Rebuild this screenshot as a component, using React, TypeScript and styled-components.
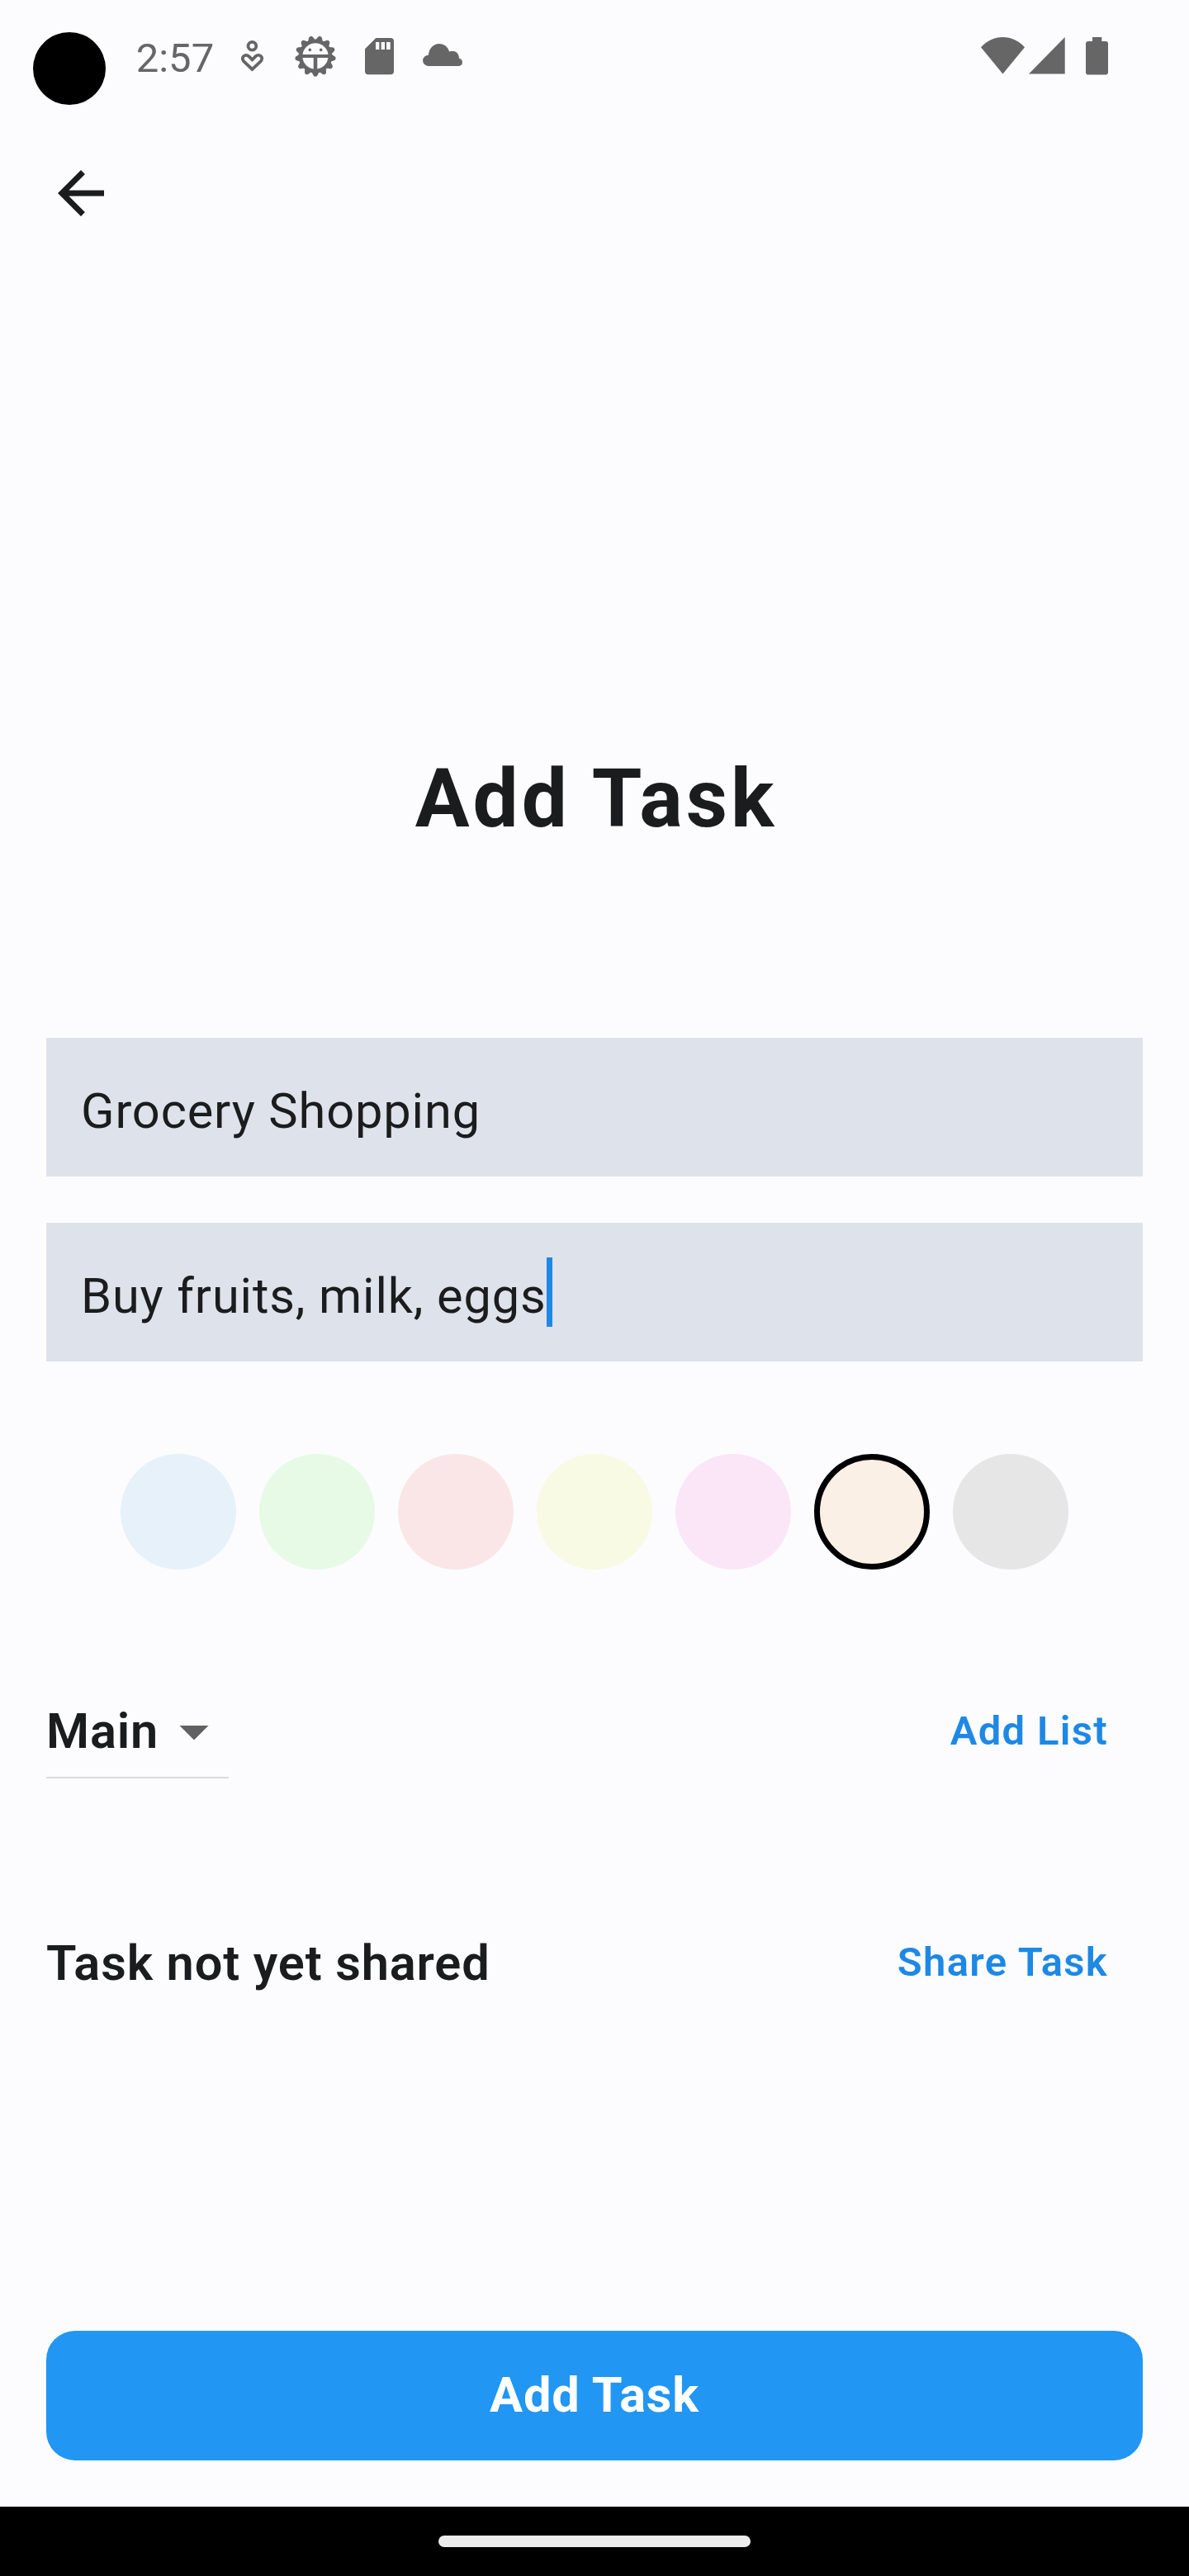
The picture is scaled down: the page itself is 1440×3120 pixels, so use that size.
import React, { useState } from "react";
import styled, { createGlobalStyle } from "styled-components";

const GlobalStyle = createGlobalStyle`
  * { box-sizing: border-box; }
  body { margin: 0; background: #fcfcff; }
`;

const Screen = styled.div`
  width: 1440px;
  height: 3120px;
  display: flex;
  flex-direction: column;
  background: #fcfcff;
  color: #1a1c1e;
  font-family: Roboto, "Noto Sans", sans-serif;
  overflow: hidden;
`;

const StatusBar = styled.header`
  display: flex;
  align-items: flex-start;
  height: 164px;
  padding: 39px 98px 0 40px;
  color: #666;
`;

const Camera = styled.div`
  width: 88px;
  height: 88px;
  border-radius: 50%;
  background: #000;
`;

const Clock = styled.time`
  margin: 2.5px 0 0 36.7px;
  width: 99.3px;
  font-size: 49px;
  line-height: 58px;
  white-space: nowrap;
`;

const StatusIcon = styled.svg<{ $left?: number; $top: number }>`
  display: block;
  flex: none;
  margin-left: ${(p) => p.$left ?? 0}px;
  margin-top: ${(p) => p.$top}px;
  fill: currentColor;
`;

const Spacer = styled.div`
  flex: 1;
`;

const AppBar = styled.nav`
  height: 140px;
  padding: 28px 56px;
`;

const BackButton = styled.button`
  display: block;
  width: 84px;
  height: 84px;
  padding: 0;
  border: 0;
  background: none;
  color: #1a1c1e;
`;

const Form = styled.main`
  flex: 1;
  display: flex;
  flex-direction: column;
  padding: 0 56px 56px;
`;

const Title = styled.h1`
  margin: 600px 0 0;
  padding-left: 4px;
  height: 128px;
  font-size: 98px;
  line-height: 128px;
  font-weight: 700;
  letter-spacing: 4px;
  text-align: center;
`;

const Fields = styled.div`
  display: flex;
  flex-direction: column;
  gap: 56px;
  margin-top: 225px;
`;

const Field = styled.div`
  display: flex;
  align-items: center;
  height: 168px;
  padding: 9px 42px 0;
  background: #dee2eb;
  font-size: 59.5px;
  line-height: 84px;
  letter-spacing: 0.875px;
  white-space: nowrap;
`;

const Caret = styled.span`
  width: 7px;
  height: 84px;
  margin: -9px 0 0 0.6px;
  background: #1e88e5;
`;

const Swatches = styled.div`
  display: flex;
  justify-content: center;
  gap: 28px;
  margin-top: 112px;
`;

const Swatch = styled.button<{ $color: string; $selected: boolean }>`
  width: 140px;
  height: 140px;
  padding: 0;
  border-radius: 50%;
  border: ${(p) => (p.$selected ? "7px solid #000" : "0")};
  background: ${(p) => p.$color};
`;

const Row = styled.div<{ $top: number }>`
  display: flex;
  justify-content: space-between;
  align-items: center;
  height: 112px;
  margin-top: ${(p) => p.$top}px;
`;

const Select = styled.div`
  display: flex;
  align-items: center;
  width: 221px;
  height: 112px;
  border-bottom: 2px solid #dadadb;
`;

const Label = styled.span`
  font-size: 59.5px;
  line-height: 84px;
  font-weight: 600;
  letter-spacing: 0.875px;
  white-space: nowrap;
`;

const SelectLabel = styled(Label)`
  width: 137px;
`;

const TextButton = styled.button`
  padding: 0 42px 3px;
  height: 112px;
  border: 0;
  background: none;
  color: #1e88e5;
  font: 600 49px/58px Roboto, "Noto Sans", sans-serif;
  letter-spacing: 1.3px;
  white-space: nowrap;
`;

const PrimaryButton = styled.button`
  height: 157.5px;
  margin-top: auto;
  padding: 0;
  border: 0;
  border-radius: 35px;
  background: #2196f3;
  color: #fff;
  font: 700 59.5px/84px Roboto, "Noto Sans", sans-serif;
  letter-spacing: 0.875px;
`;

const NavBar = styled.footer`
  display: flex;
  justify-content: center;
  align-items: center;
  height: 84px;
  background: #000;
`;

const HomePill = styled.div`
  width: 378px;
  height: 14px;
  border-radius: 7px;
  background: #ececec;
`;

const palette = ["#e6f1fa", "#e6fae6", "#fae6e6", "#f8fae4", "#fae6f6", "#faf0e6", "#e6e6e6"];

function HeartPerson() {
  return (
    <StatusIcon $left={28} $top={9} width="28" height="40" viewBox="0 0 28 40">
      <g fill="none" stroke="currentColor" strokeWidth="3.8">
        <circle cx="13.4" cy="7.8" r="4.9" />
        <path d="M13.5 36 3.6 26.6C1.2 24.2 1.4 21.6 3 20.1c1.7-1.7 4.6-1.6 6.3.1L13.5 24.3 17.7 20.2c1.7-1.7 4.6-1.8 6.3-.1 1.6 1.5 1.8 4.1-.6 6.5z" />
      </g>
    </StatusIcon>
  );
}

function GearFace() {
  const count = 13;
  const teeth = Array.from({ length: count }, (_, i) => (i * 360) / count);
  return (
    <StatusIcon $left={36} $top={3} width="52" height="52" viewBox="-26 -26 52 52">
      {teeth.map((a) => (
        <path
          key={a}
          d="M-5.6 18.5Q-3.600 20-2.900 22.400-2.200 24.800 0 24.800 2.200 24.800 2.900 22.400 3.600 20 5.600 18.500z"
          transform={`rotate(${a})`}
        />
      ))}
      <path
        fillRule="evenodd"
        d="M0-20.300A20.300 20.300 0 1 1 0 20.300A20.300 20.300 0 1 1 0-20.300zM-15.500-2H15.500A15.600 15.600 0 0 0-15.500-2zM-15.500 2A15.600 15.600 0 0 0-2.300 15.500V2zM2.300 2V15.500A15.600 15.600 0 0 0 15.500 2z"
      />
      <circle cx="-6.7" cy="-7.6" r="1.8" />
      <circle cx="6.7" cy="-7.6" r="1.8" />
    </StatusIcon>
  );
}

function SdCard() {
  return (
    <StatusIcon $left={34} $top={7} width="35" height="45" viewBox="0 0 35 45">
      <path
        fillRule="evenodd"
        d="M13.3 0H31a4 4 0 0 1 4 4v36.3a4 4 0 0 1-4 4H4a4 4 0 0 1-4-4V13.3zM13 5v9h4.3V5zM19.7 5v9H24V5zM26 5v9h4.7V5z"
      />
    </StatusIcon>
  );
}

function Cloud() {
  return (
    <StatusIcon $left={35} $top={14} width="49" height="27" viewBox="0 0 49 27">
      <path d="M6.5 27A6.6 6.6 0 0 1 7 13.7C7.2 5.9 13 0 20 0c5.7 0 10.4 3.8 12.2 9.4C34 9 35.7 9 37 9.1 41 9.4 44 12.8 44 17.8a4.7 4.7 0 0 1 .3 9.2z" />
    </StatusIcon>
  );
}

function Wifi() {
  return (
    <StatusIcon $top={6} width="53" height="45" viewBox="0 0 53 45">
      <path d="M26.5 44.5 0 12.3C7 4.3 16.5 0 26.5 0S46 4.3 53 12.3z" />
    </StatusIcon>
  );
}

function Signal() {
  return (
    <StatusIcon $left={5} $top={6} width="44" height="45" viewBox="0 0 44 45">
      <path d="M43.7 0V44.5H0z" />
    </StatusIcon>
  );
}

function Battery() {
  return (
    <StatusIcon $left={25} $top={6} width="27" height="46" viewBox="0 0 27 46">
      <path d="M8 0H19.3V5H24a3 3 0 0 1 3 3V42.5a3 3 0 0 1-3 3H3a3 3 0 0 1-3-3V8a3 3 0 0 1 3-3H8z" />
    </StatusIcon>
  );
}

export default function App() {
  const [color, setColor] = useState(5);
  return (
    <Screen>
      <GlobalStyle />
      <StatusBar>
        <Camera />
        <Clock>2:57</Clock>
        <HeartPerson />
        <GearFace />
        <SdCard />
        <Cloud />
        <Spacer />
        <Wifi />
        <Signal />
        <Battery />
      </StatusBar>
      <AppBar>
        <BackButton aria-label="Back">
          <svg width="84" height="84" viewBox="0 0 24 24" fill="currentColor" display="block">
            <path d="M20 11H7.83l5.59-5.59L12 4l-8 8 8 8 1.41-1.41L7.83 13H20v-2z" />
          </svg>
        </BackButton>
      </AppBar>
      <Form>
        <Title>Add Task</Title>
        <Fields>
          <Field>Grocery Shopping</Field>
          <Field>
            Buy fruits, milk, eggs
            <Caret />
          </Field>
        </Fields>
        <Swatches>
          {palette.map((c, i) => (
            <Swatch key={c} $color={c} $selected={i === color} onClick={() => setColor(i)} />
          ))}
        </Swatches>
        <Row $top={141}>
          <Select>
            <SelectLabel>Main</SelectLabel>
            <svg width="84" height="84" viewBox="0 0 24 24" fill="#616161">
              <path d="M7 10l5 5 5-5z" />
            </svg>
          </Select>
          <TextButton>Add List</TextButton>
        </Row>
        <Row $top={168}>
          <Label>Task not yet shared</Label>
          <TextButton>Share Task</TextButton>
        </Row>
        <PrimaryButton>Add Task</PrimaryButton>
      </Form>
      <NavBar>
        <HomePill />
      </NavBar>
    </Screen>
  );
}
